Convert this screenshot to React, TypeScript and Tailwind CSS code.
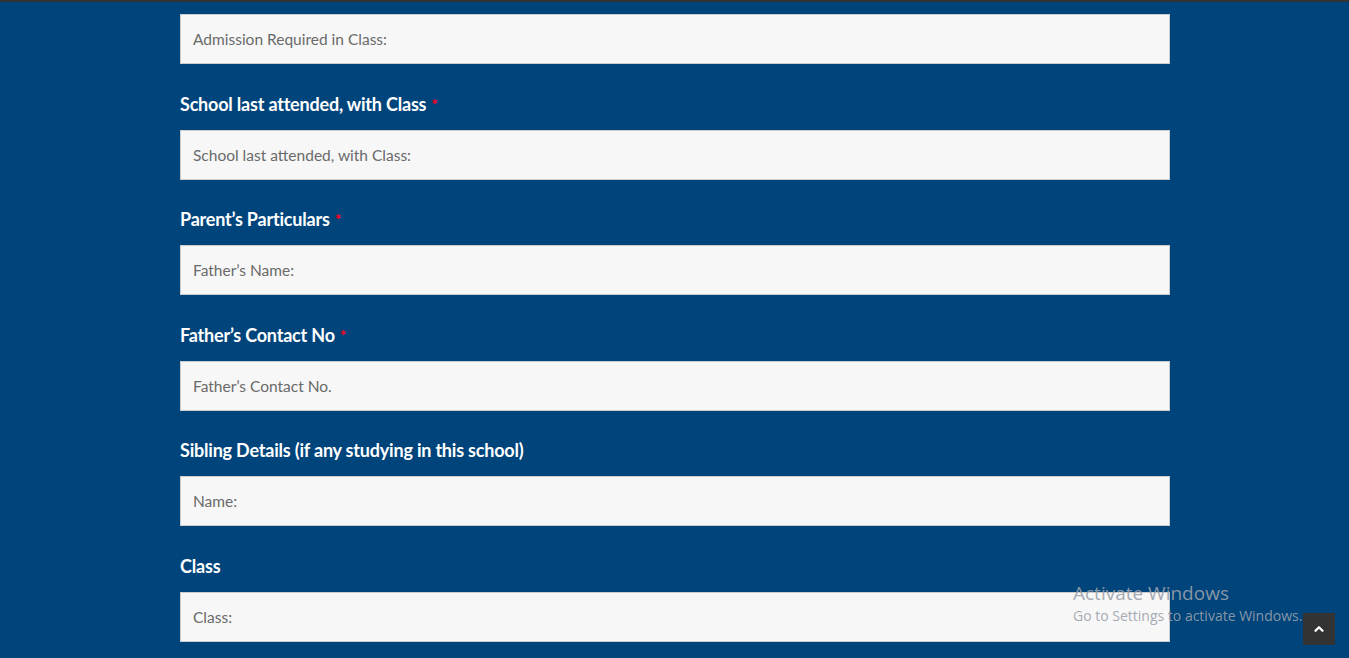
import { ChevronUp } from "lucide-react";

const fields = [
  { label: null, required: false, placeholder: "Admission Required in Class:" },
  { label: "School last attended, with Class", required: true, placeholder: "School last attended, with Class:" },
  { label: "Parent\u2019s Particulars", required: true, placeholder: "Father\u2019s Name:" },
  { label: "Father\u2019s Contact No", required: true, placeholder: "Father\u2019s Contact No." },
  { label: "Sibling Details (if any studying in this school)", required: false, placeholder: "Name:" },
  { label: "Class", required: false, placeholder: "Class:" },
];

function Field({ label, required, placeholder }: { label: string | null; required: boolean; placeholder: string }) {
  return (
    <div className={label ? "mt-[27.5px]" : ""}>
      {label && (
        <label className="block mb-[14px] text-[18px] leading-[24px] font-bold text-white tracking-[-0.2px]">
          {label}
          {required && <span className="ml-[5px] text-[#ff0022] text-[16px] align-top">*</span>}
        </label>
      )}
      <input
        type="text"
        placeholder={placeholder}
        className="block w-full h-[50px] px-[12px] bg-[#f7f7f7] border border-[#cccccc] text-[15.5px] text-[#555] placeholder:text-[#6a6a6a] outline-none"
      />
    </div>
  );
}

export default function App() {
  return (
    <div className="relative min-h-[658px] bg-[#00447c] overflow-hidden" style={{ fontFamily: "Lato, 'Open Sans', sans-serif" }}>
      <div className="h-[2px] bg-[#333]" />
      <form className="w-[990px] ml-[180px] pt-[12px]">
        {fields.map((f) => (
          <Field key={f.placeholder} {...f} />
        ))}
      </form>

      <div className="absolute z-10 left-[1073px] top-[581px] pointer-events-none text-[#9aa1aa]/90" style={{ fontFamily: "'Open Sans', sans-serif" }}>
        <div className="text-[19px] leading-[24px]">Activate Windows</div>
        <div className="text-[14px] leading-[20px] mt-[1px]">Go to Settings to activate Windows.</div>
      </div>

      <button className="absolute z-20 left-[1303px] top-[613px] w-[32px] h-[32px] bg-[#333] flex items-center justify-center">
        <ChevronUp className="w-[14px] h-[14px] text-white" strokeWidth={4} />
      </button>
    </div>
  );
}
